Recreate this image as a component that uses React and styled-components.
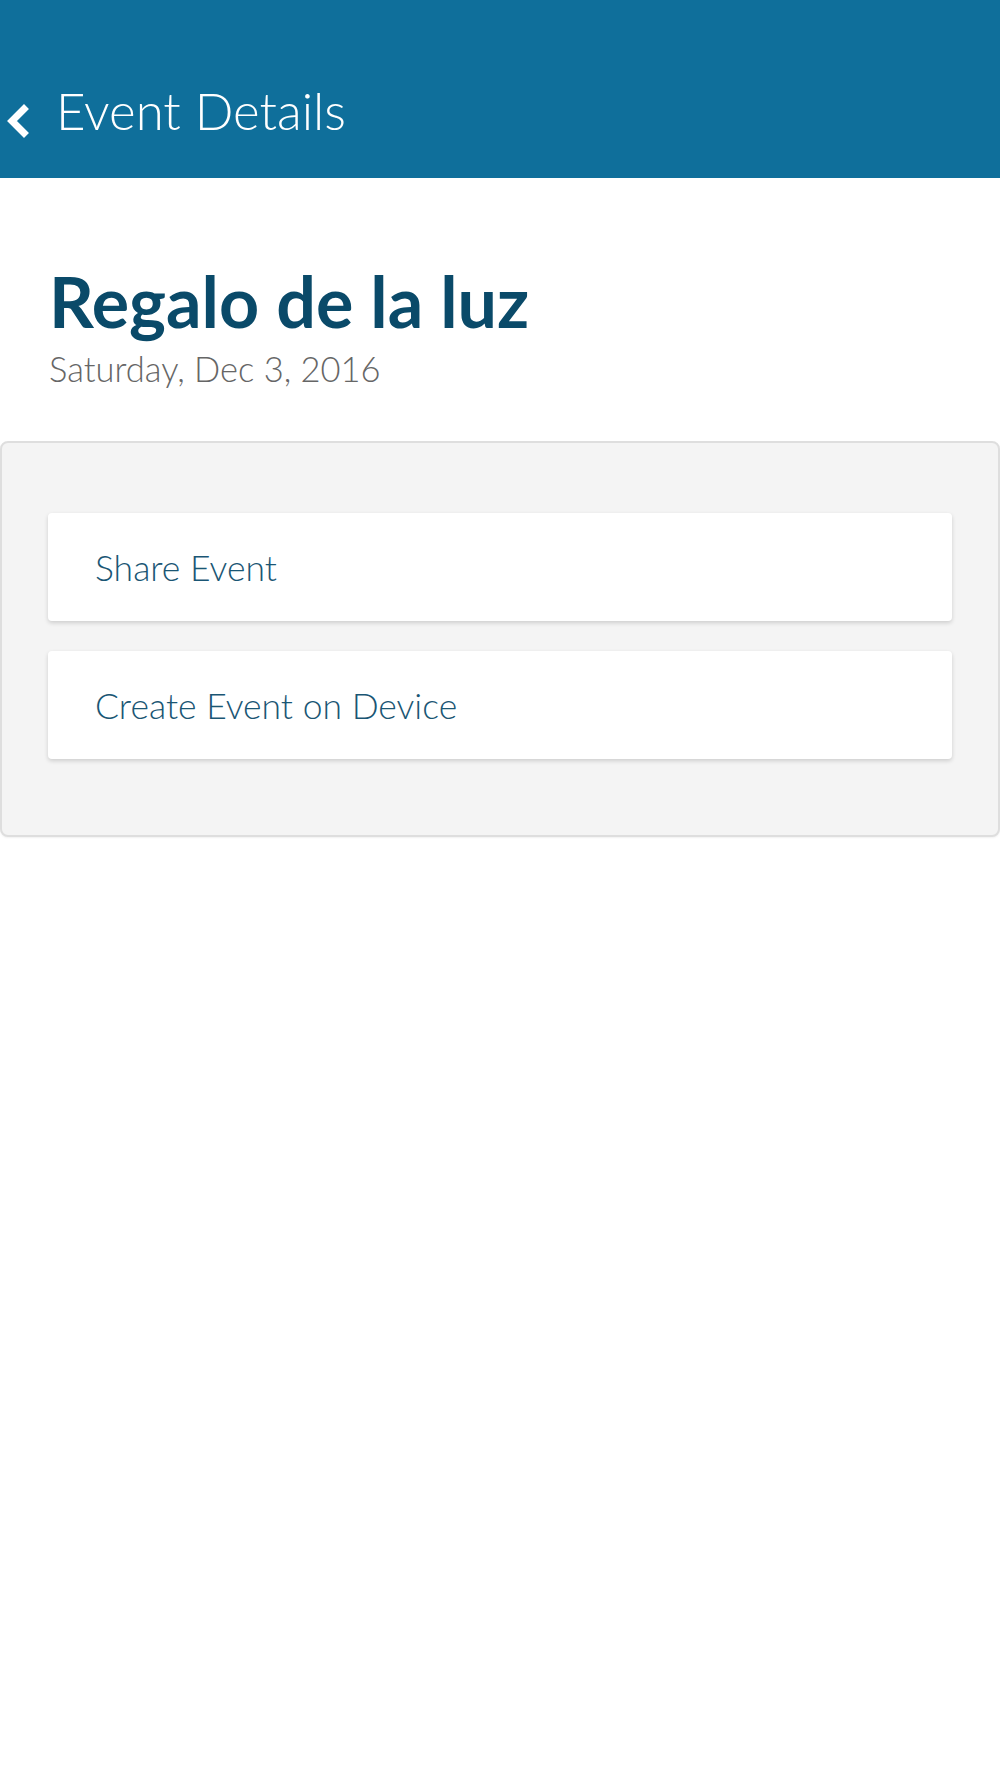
import React from "react";
import styled, { createGlobalStyle } from "styled-components";

const GlobalStyle = createGlobalStyle`
  html, body {
    margin: 0;
    padding: 0;
    background: #ffffff;
    font-family: Lato, "Open Sans", sans-serif;
  }
`;

const Page = styled.div`
  width: 1000px;
  min-height: 1778px;
  background: #ffffff;
`;

const Header = styled.header`
  height: 178px;
  background: #0f6f9b;
  display: flex;
  align-items: flex-end;
  box-sizing: border-box;
  padding: 0 0 38px 5px;
`;

const BackButton = styled.button`
  background: transparent;
  border: none;
  padding: 0;
  margin: 0 27px 2px 0;
  display: flex;
  cursor: pointer;
`;

const HeaderTitle = styled.h1`
  margin: 0 0 4px;
  font-size: 51px;
  font-weight: 300;
  line-height: 1;
  color: #ffffff;
`;

const Hero = styled.section`
  padding: 88px 49px 0;
`;

const EventName = styled.h2`
  margin: 0;
  font-size: 70px;
  font-weight: 700;
  line-height: 1;
  color: #0a4a69;
`;

const EventDate = styled.p`
  margin: 12px 0 0;
  font-size: 34.5px;
  font-weight: 300;
  line-height: 1.2;
  color: #666666;
`;

const Panel = styled.div`
  margin-top: 52px;
  background: #f4f4f4;
  border: 2px solid #dedede;
  border-radius: 8px;
  box-shadow: 0 1px 2px rgba(0, 0, 0, 0.06);
  padding: 70px 46px 76px;
  display: flex;
  flex-direction: column;
  gap: 30px;
`;

const ActionCard = styled.button`
  height: 108px;
  background: #ffffff;
  border: none;
  border-radius: 4px;
  box-shadow: 0 2px 4px rgba(0, 0, 0, 0.16);
  padding: 0 47px;
  text-align: left;
  font-family: inherit;
  font-size: 35.5px;
  font-weight: 300;
  color: #1a5674;
  cursor: pointer;
`;

const ChevronLeft = () => (
  <svg width="24" height="34" viewBox="0 0 24 34">
    <polyline
      points="19,5 7,17 19,29"
      fill="none"
      stroke="#ffffff"
      strokeWidth="7"
      strokeLinecap="square"
    />
  </svg>
);

export default function App() {
  return (
    <Page>
      <GlobalStyle />
      <Header>
        <BackButton aria-label="Back">
          <ChevronLeft />
        </BackButton>
        <HeaderTitle>Event Details</HeaderTitle>
      </Header>
      <Hero>
        <EventName>Regalo de la luz</EventName>
        <EventDate>Saturday, Dec 3, 2016</EventDate>
      </Hero>
      <Panel>
        <ActionCard>Share Event</ActionCard>
        <ActionCard>Create Event on Device</ActionCard>
      </Panel>
    </Page>
  );
}
